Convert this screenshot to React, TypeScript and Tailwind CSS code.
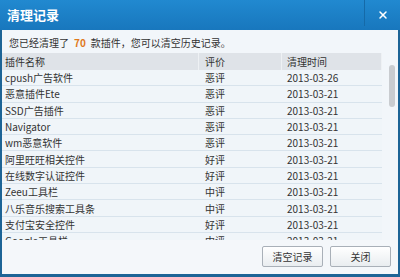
import { X } from 'lucide-react';

const records = [
  { name: 'cpush广告软件', rating: '恶评', time: '2013-03-26' },
  { name: '恶意插件Ete', rating: '恶评', time: '2013-03-21' },
  { name: 'SSD广告插件', rating: '恶评', time: '2013-03-21' },
  { name: 'Navigator', rating: '恶评', time: '2013-03-21' },
  { name: 'wm恶意软件', rating: '恶评', time: '2013-03-21' },
  { name: '阿里旺旺相关控件', rating: '好评', time: '2013-03-21' },
  { name: '在线数字认证控件', rating: '好评', time: '2013-03-21' },
  { name: 'Zeeu工具栏', rating: '中评', time: '2013-03-21' },
  { name: '八乐音乐搜索工具条', rating: '中评', time: '2013-03-21' },
  { name: '支付宝安全控件', rating: '好评', time: '2013-03-21' },
  { name: 'Google工具栏', rating: '中评', time: '2013-03-21' },
];

const App = () => {
  return (
    <div
      className="w-[400px] h-[277px] flex flex-col overflow-hidden text-[#333] text-[10px]"
      style={{ fontFamily: '"Noto Sans CJK SC", "Microsoft YaHei", sans-serif' }}
    >
      {/* title bar */}
      <div className="h-[30px] shrink-0 flex items-stretch bg-gradient-to-b from-[#2189d0] to-[#1877bd]">
        <div className="flex-1 flex items-center pl-[7px] text-white text-[13px] font-bold">清理记录</div>
        <div className="w-[36px] border-l border-[#156aa8] mb-[4px] flex items-center justify-center">
          <X size={12} strokeWidth={3} className="text-white mt-[4px]" />
        </div>
      </div>

      <div className="flex-1 flex flex-col bg-[#f2f6fa] border-x-2 border-b-[3px] border-[#1d6496] min-h-0">
        {/* info line */}
        <div className="h-[23px] shrink-0 flex items-center pl-[7px] pt-[2px]">
          您已经清理了<span className="mx-[5px] text-[#e07a1c] font-bold">70</span>款插件，您可以清空历史记录。
        </div>

        {/* table */}
        <div className="h-[187px] shrink-0 flex overflow-hidden">
          <div className="flex-1 flex flex-col">
            <div className="h-[17px] shrink-0 flex items-center bg-[#dfe3e8]">
              <div className="w-[197px] pl-[3px] border-r border-[#eef1f4] h-full flex items-center">插件名称</div>
              <div className="w-[83px] pl-[6px] border-r border-[#eef1f4] h-full flex items-center">评价</div>
              <div className="flex-1 pl-[5px] border-r border-[#eef1f4] h-full flex items-center">清理时间</div>
            </div>
            {records.map((r) => (
              <div key={r.name} className="h-[16.3px] shrink-0 flex items-center border-b border-[#d8e3ec] bg-[#f0f5f9]">
                <div className="w-[197px] pl-[3px]">{r.name}</div>
                <div className="w-[83px] pl-[6px]">{r.rating}</div>
                <div className="flex-1 pl-[5px]">{r.time}</div>
              </div>
            ))}
          </div>
          {/* scrollbar */}
          <div className="w-[16px] shrink-0 pt-[12px] pl-[7px]">
            <div className="w-[6px] h-[42px] rounded-full bg-[#c9ccd0]" />
          </div>
        </div>

        {/* footer */}
        <div className="flex-1 flex items-center justify-end gap-[7px] pr-[7px] pb-[1px] bg-[#f4f7fa]">
          <button className="w-[61px] h-[21px] rounded-[2px] border border-[#a9b0b8] bg-gradient-to-b from-white to-[#e9edf0] text-[10px] text-[#333]">
            清空记录
          </button>
          <button className="w-[61px] h-[21px] rounded-[2px] border border-[#a9b0b8] bg-gradient-to-b from-white to-[#e9edf0] text-[10px] text-[#333]">
            关闭
          </button>
        </div>
      </div>
    </div>
  );
};

export default App;
